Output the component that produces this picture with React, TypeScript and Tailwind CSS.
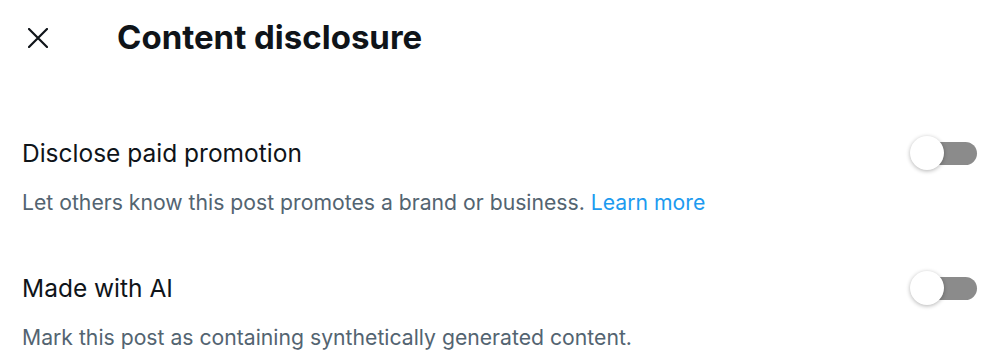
interface DisclosureOption {
  id: string;
  label: string;
  description: string;
  link?: string;
}

const options: DisclosureOption[] = [
  {
    id: "paid",
    label: "Disclose paid promotion",
    description: "Let others know this post promotes a brand or business.",
    link: "Learn more",
  },
  {
    id: "ai",
    label: "Made with AI",
    description: "Mark this post as containing synthetically generated content.",
  },
];

function Toggle() {
  return (
    <div className="relative w-[67px] h-[34px] flex items-center shrink-0">
      <div className="ml-[5px] w-[62px] h-[23px] rounded-full bg-[#8b8b8b]" />
      {/* thumb sits over the track */}
      <div className="absolute left-0 top-0 w-[34px] h-[34px] rounded-full bg-white shadow-[0_1px_4px_rgba(0,0,0,0.3)]" />
    </div>
  );
}

export default function App() {
  return (
    <div className="w-[1000px] h-[359px] bg-white overflow-hidden font-['Inter',sans-serif] text-[#0f1419]">
      {/* Header */}
      <div className="h-[76px] flex items-center">
        <button className="ml-[28px] w-[20px] h-[20px] flex items-center justify-center">
          <svg viewBox="0 0 20 20" className="w-[20px] h-[20px]" fill="none" stroke="currentColor" strokeWidth={2.2} strokeLinecap="round">
            <path d="M1 1 L19 19 M19 1 L1 19" />
          </svg>
        </button>
        <h1 className="ml-[69px] mb-[2px] text-[33px] font-bold leading-none">Content disclosure</h1>
      </div>

      {/* Options */}
      <div className="pl-[22px] pr-[23px]">
        {options.map((opt, i) => (
          <div key={opt.id} className={i === 0 ? "mt-[60px]" : "mt-[57px]"}>
            <div className="flex items-center justify-between h-[34px]">
              <span className="text-[24.5px] leading-[34px]">{opt.label}</span>
              <Toggle />
            </div>
            <p className="mt-[20px] text-[21.2px] leading-[24px] text-[#536471]">
              {opt.description}
              {opt.link && <span className="text-[#1d9bf0]"> {opt.link}</span>}
            </p>
          </div>
        ))}
      </div>
    </div>
  );
}
